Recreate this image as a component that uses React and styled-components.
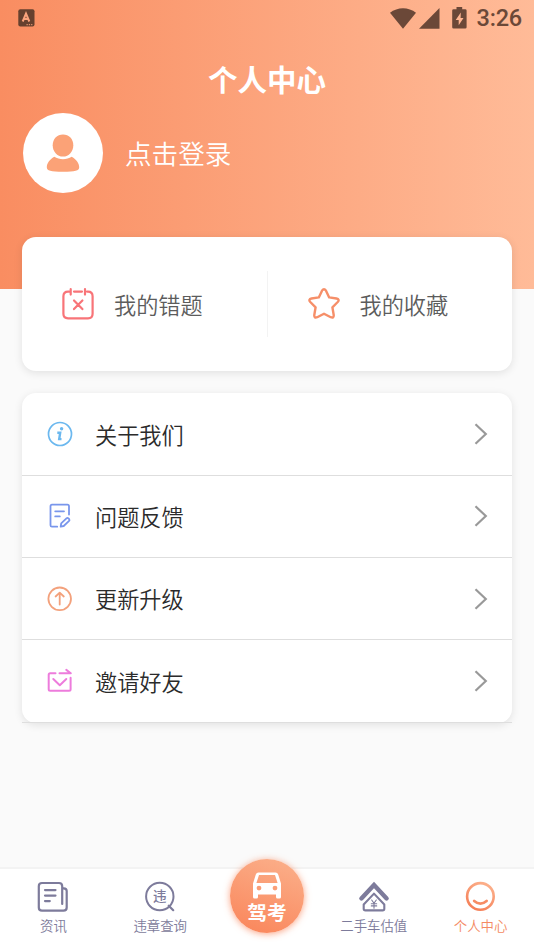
import React from "react";
import styled, { createGlobalStyle } from "styled-components";

function App() {
  return (
    <>
      <GlobalStyle />
      <Page>
        <Header>
          <StatusBar>
            <KeyboardIcon />
            <StatusRight>
              <WifiIcon />
              <SignalIcon />
              <BatteryIcon />
              <Clock>3:26</Clock>
            </StatusRight>
          </StatusBar>
          <Title>个人中心</Title>
          <Profile>
            <Avatar>
              <UserIcon />
            </Avatar>
            <Login>点击登录</Login>
          </Profile>
        </Header>

        <Content>
          <Shortcuts>
            <Shortcut>
              <WrongIcon />
              <span>我的错题</span>
            </Shortcut>
            <Divider />
            <Shortcut>
              <StarIcon />
              <span>我的收藏</span>
            </Shortcut>
          </Shortcuts>

          <Menu>
            {menu.map(({ label, Icon }) => (
              <MenuItem key={label}>
                <Icon />
                <span>{label}</span>
                <Arrow />
              </MenuItem>
            ))}
          </Menu>
        </Content>

        <TabBar>
          <Tab>
            <NewsIcon />
            <span>资讯</span>
          </Tab>
          <Tab>
            <SearchIcon />
            <span>违章查询</span>
          </Tab>
          <MainTab>
            <CarIcon />
            <span>驾考</span>
          </MainTab>
          <Tab>
            <HouseIcon />
            <span>二手车估值</span>
          </Tab>
          <Tab $active>
            <SmileIcon />
            <span>个人中心</span>
          </Tab>
        </TabBar>
      </Page>
    </>
  );
}

// Status bar icons
const KeyboardIcon = () => (
  <svg width="17" height="18" viewBox="0 0 17 18">
    <rect x="0.3" y="0.3" width="16.2" height="17.2" rx="2" fill="#66402e" />
    <path
      d="M4.7 12.5 8 4.6l3.3 7.9M5.9 10h4.2"
      fill="none"
      stroke="#fba37c"
      strokeWidth="2"
    />
    <path d="M8.5 15.7h6" stroke="#fba37c" strokeDasharray="1.3 1" />
  </svg>
);

const WifiIcon = () => (
  <svg width="26" height="21" viewBox="0 0 26 21">
    <path d="M0 4.7C7.5-1.4 18.5-1.4 26 4.7L13 20.8z" fill="#6b4838" />
  </svg>
);

const SignalIcon = () => (
  <svg width="21" height="21" viewBox="0 0 21 21">
    <path d="M20.5 0v20.7H0z" fill="#6b4838" />
  </svg>
);

const BatteryIcon = () => (
  <svg width="15" height="22" viewBox="0 0 15 22">
    <path
      d="M4.5 0h5.7v2.2h3q1.4 0 1.4 1.4v16.6q0 1.4-1.4 1.4H1.6q-1.4 0-1.4-1.4V3.6q0-1.4 1.4-1.4h2.9z"
      fill="#6b4838"
    />
    <path d="M8.800 5.600 3.700 13h3v5.300L11.500 11H8.600z" fill="#ffb591" />
  </svg>
);

// Page icons
const UserIcon = () => (
  <svg width="34" height="40" viewBox="0 0 34 40" fill="#fba277">
    <path d="M17 1.500c6 0 10.300 4.500 10.300 10.700S23 23.600 17 23.600 6.700 18.400 6.700 12.200 11 1.500 17 1.500z" />
    <path d="M8.300 23.800c4.900 3.200 12.500 3.200 17.400 0 4.700 2.600 7.500 6.700 7.500 10.400 0 3.600-4 4.500-16.200 4.500S.8 37.800.8 34.200c0-3.700 2.800-7.800 7.500-10.400z" />
  </svg>
);

const WrongIcon = () => (
  <svg
    width="32"
    height="32"
    viewBox="0 0 32 32"
    fill="none"
    stroke="#f87478"
    strokeWidth="2.2"
    strokeLinecap="round"
  >
    <path d="M12 3.600h8M25 3.600h1q4.600 0 4.600 4.600v17.500q0 4.600-4.600 4.600H6q-4.600 0-4.600-4.600V8.200Q1.400 3.600 6 3.600h1M8.700 1.200v5.400M23 1.200v5.400M12 12.500l8.400 8.600M20.400 12.500l-8.400 8.600" />
  </svg>
);

const StarIcon = () => (
  <svg width="32" height="32" viewBox="0 0 32 32">
    <path
      d="M14 2.700q2-3 4 0l3.200 6.700 7.300 1.100q3.500.8 1.200 3.500l-5.300 5.300 1.300 7.700q.3 3.300-2.900 2.200L16 25.700l-6.800 3.500q-3.200 1.100-2.900-2.200l1.300-7.700L2.300 14q-2.300-2.700 1.200-3.500l7.300-1.100z"
      fill="none"
      stroke="#f68f69"
      strokeWidth="2.4"
      strokeLinejoin="round"
    />
  </svg>
);

const InfoIcon = () => (
  <svg width="26" height="26" viewBox="0 0 26 26" fill="none" stroke="#6bb8ef">
    <circle cx="13" cy="13" r="11.500" strokeWidth="1.700" />
    <circle cx="14.600" cy="7.800" r="1.700" fill="#6bb8ef" stroke="none" />
    <path d="M10.300 11.700h2.900l-1 6.400h2.300" strokeWidth="2.400" />
  </svg>
);

const FeedbackIcon = () => (
  <svg
    width="26"
    height="26"
    viewBox="0 0 26 26"
    fill="none"
    stroke="#7996ec"
    strokeWidth="1.800"
    strokeLinecap="round"
    strokeLinejoin="round"
  >
    <path d="M22 11.600V3.200q0-1.500-1.500-1.500H5Q3.500 1.700 3.500 3.200v19q0 1.500 1.500 1.500h5.200M8.200 8.300h8.800M8.200 13.400h4.600" />
    <path d="m13.700 23.700.5-3.300 5.500-5.200q.9-.7 1.700.1l.8.9q.7.900-.1 1.600l-5.400 5.200z" />
  </svg>
);

const UpgradeIcon = () => (
  <svg
    width="26"
    height="26"
    viewBox="0 0 26 26"
    fill="none"
    stroke="#f3a17c"
    strokeWidth="1.800"
    strokeLinecap="round"
    strokeLinejoin="round"
  >
    <circle cx="12.700" cy="12.800" r="11.300" />
    <path d="M12.700 18.500V7M8.600 10.500l4.100-3.900 4.100 3.900" />
  </svg>
);

const InviteIcon = () => (
  <svg
    width="26"
    height="26"
    viewBox="0 0 26 26"
    fill="none"
    stroke="#ed7cdc"
    strokeWidth="2"
    strokeLinecap="round"
    strokeLinejoin="round"
  >
    <path d="M8.500 5.200H3.200q-1.500 0-1.500 1.500v14.500q0 1.500 1.500 1.500h18.900q1.500 0 1.500-1.500V9.700M6.300 11l6.500 6.200L19.300 11M12.500 5.200h11.300l-4.500-3.300" />
  </svg>
);

const Arrow = () => (
  <svg width="14" height="22" viewBox="0 0 14 22">
    <path d="m1.500 1.300 10.300 9.700-10.300 9.700" fill="none" stroke="#999" strokeWidth="2.200" />
  </svg>
);

// Tab bar icons
const NewsIcon = () => (
  <svg
    width="32"
    height="32"
    viewBox="0 0 32 32"
    fill="none"
    stroke="#7d7b9b"
    strokeWidth="2.200"
    strokeLinecap="round"
  >
    <path d="M25.200 23V5.200Q25.200 2 22 2H5Q1.800 2 1.800 5.200v21.300q0 3.200 3.200 3.200h21.500q3.200 0 3.200-3.200V10q0-2.500-3-2.700M8 9.100h10.500M8 14.600h10.500M8 20.100h4.800" />
  </svg>
);

const SearchIcon = () => (
  <svg width="32" height="32" viewBox="0 0 32 32">
    <circle cx="15.800" cy="15.500" r="13.700" fill="none" stroke="#7d7b9b" strokeWidth="2" />
    <path d="m24.700 24.700 4.500 4.500" stroke="#7d7b9b" strokeWidth="2.200" strokeLinecap="round" />
    <text x="15.800" y="20.400" textAnchor="middle" fontSize="13.500" fontWeight="500" fill="#7d7b9b">
      违
    </text>
  </svg>
);

const CarIcon = () => (
  <svg width="30" height="27" viewBox="0 0 30 27">
    <path
      fill="#fff"
      fillRule="evenodd"
      d="M6.500.5h17q2 0 2.700 2L29 11.500V25q0 1.500-1.500 1.500h-2Q24 26.500 24 25v-2.500H6V25q0 1.500-1.500 1.500h-2Q1 26.500 1 25V11.500L3.800 2.500Q4.500.5 6.500.5zM7 3 4.400 11h21.200L23 3zM7 13.700a2.400 2.400 0 1 0 0 4.800 2.400 2.400 0 0 0 0-4.800zm16 0a2.400 2.400 0 1 0 0 4.800 2.400 2.400 0 0 0 0-4.800z"
    />
  </svg>
);

const HouseIcon = () => (
  <svg
    width="32"
    height="32"
    viewBox="0 0 32 32"
    fill="none"
    stroke="#7d7b9b"
    strokeLinecap="round"
    strokeLinejoin="round"
  >
    <path d="M3.400 17.400 16 4l12.600 13.400" strokeWidth="4.400" strokeLinejoin="miter" />
    <path d="M16 12.600 5.700 23.500v4.200q0 1.700 1.700 1.700h17.200q1.700 0 1.700-1.700v-4.200z" strokeWidth="2.100" />
    <path d="m13.700 19 2.300 3.300 2.300-3.300M16 22.300v4.900M13.300 22.700h5.400M13.300 24.900h5.400" strokeWidth="1.100" />
  </svg>
);

const SmileIcon = () => (
  <svg width="32" height="32" viewBox="0 0 32 32" fill="none" strokeLinecap="round">
    <defs>
      <linearGradient id="smile" x1="0.8" y1="0" x2="0.3" y2="1">
        <stop offset="0" stopColor="#fcb18c" />
        <stop offset="1" stopColor="#f57f57" />
      </linearGradient>
    </defs>
    <circle cx="15.400" cy="15.400" r="13.300" stroke="url(#smile)" strokeWidth="2.600" />
    <path d="M9.200 20q6.200 5.200 12.400 0" stroke="#f68c64" strokeWidth="2.800" />
  </svg>
);

const menu = [
  { label: "关于我们", Icon: InfoIcon },
  { label: "问题反馈", Icon: FeedbackIcon },
  { label: "更新升级", Icon: UpgradeIcon },
  { label: "邀请好友", Icon: InviteIcon },
];

const GlobalStyle = createGlobalStyle`
  * {
    box-sizing: border-box;
  }
  body {
    margin: 0;
    background: #fafafa;
    font-family: "Noto Sans CJK SC", sans-serif;
    font-weight: 350;
  }
  svg {
    display: block;
    flex-shrink: 0;
  }
`;

const Page = styled.div`
  display: flex;
  flex-direction: column;
  height: 950px;
  overflow: hidden;
`;

const Header = styled.header`
  height: 289px;
  flex-shrink: 0;
  color: white;
  background: linear-gradient(90deg, #f98d61, #ffbb98);
`;

const StatusBar = styled.div`
  display: flex;
  align-items: center;
  justify-content: space-between;
  height: 36px;
  padding: 0 12px 0 18px;
`;

const StatusRight = styled.div`
  display: flex;
  align-items: center;
  svg:nth-child(2) {
    margin: 0 12px 0 3px;
  }
`;

const Clock = styled.span`
  margin-left: 10px;
  font-family: Roboto, sans-serif;
  font-size: 23.5px;
  font-weight: 500;
  line-height: 36px;
  letter-spacing: -0.2px;
  color: #6b4838;
`;

const Title = styled.h1`
  margin: 20px 0 13px;
  text-align: center;
  font-size: 29.5px;
  font-weight: 700;
  line-height: 44px;
`;

const Profile = styled.div`
  display: flex;
  align-items: center;
  gap: 22px;
  padding-left: 23px;
`;

const Avatar = styled.div`
  display: flex;
  align-items: center;
  justify-content: center;
  width: 80px;
  height: 80px;
  border-radius: 50%;
  background: white;
`;

const Login = styled.span`
  font-size: 26.6px;
  line-height: 40px;
`;

const Content = styled.main`
  flex: 1;
  margin-top: -52px;
  padding: 0 22px;
`;

const Card = styled.section`
  border-radius: 14px;
  background: white;
  box-shadow: 0 2px 8px rgba(0, 0, 0, 0.1);
`;

const Shortcuts = styled(Card)`
  display: flex;
  align-items: center;
  height: 134px;
  margin-bottom: 22px;
`;

const Shortcut = styled.div`
  display: flex;
  flex: 1;
  align-items: center;
  gap: 20px;
  padding-left: 40px;
  font-size: 22.2px;
  line-height: 32px;
  color: #5c5c5c;
`;

const Divider = styled.div`
  width: 1px;
  height: 66px;
  background: #f3f3f3;
`;

const Menu = styled(Card)`
  display: flex;
  flex-direction: column;
  padding-top: 0.5px;
`;

const MenuItem = styled.div`
  display: flex;
  align-items: center;
  height: 82.3px;
  padding: 0 24px 0 25px;
  border-bottom: 1px solid #dedede;
  font-size: 22.2px;
  line-height: 32px;
  color: #2b2b2b;
  span {
    flex: 1;
    margin-left: 22px;
    padding-bottom: 1px;
  }
`;

const TabBar = styled.nav`
  display: grid;
  grid-template-columns: repeat(5, 1fr);
  height: 83px;
  border-top: 2px solid #f3f3f3;
  background: white;
`;

const Tab = styled.div`
  display: flex;
  flex-direction: column;
  align-items: center;
  padding-top: 12px;
  font-size: 13.4px;
  line-height: 20px;
  white-space: nowrap;
  color: ${({ $active }) => ($active ? "#f48a62" : "#7d7b9b")};
  span {
    margin-top: 2px;
  }
`;

const MainTab = styled.div`
  display: flex;
  flex-direction: column;
  align-items: center;
  justify-self: center;
  width: 74px;
  height: 74px;
  margin-top: -10px;
  padding-top: 13px;
  border-radius: 50%;
  background: linear-gradient(200deg, #fbb18c, #fa8459);
  box-shadow: 0 1px 7px rgba(250, 125, 80, 0.7);
  font-size: 19.7px;
  font-weight: 700;
  line-height: 25px;
  color: white;
`;

export default App;
